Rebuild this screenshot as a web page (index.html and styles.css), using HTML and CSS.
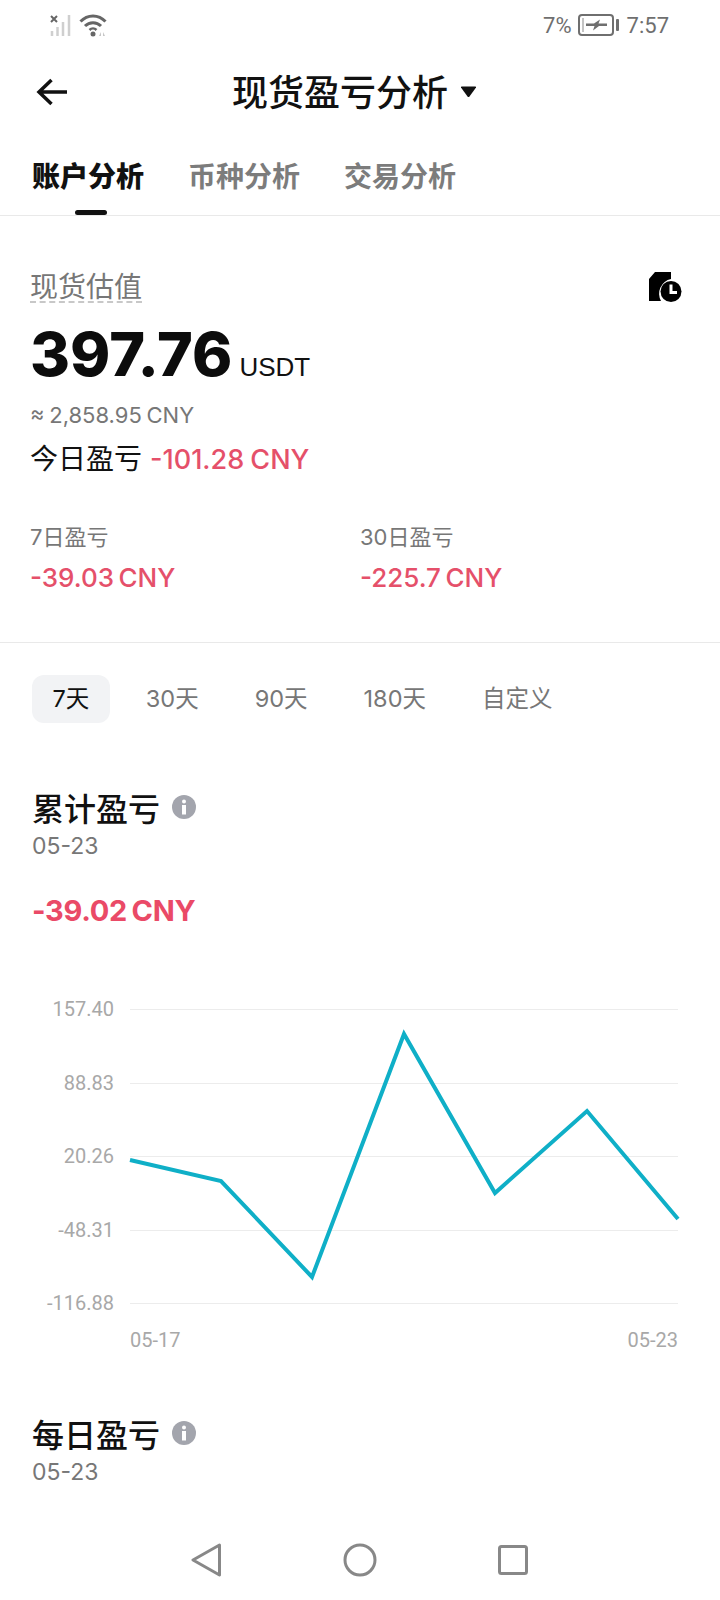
FILE: index.html
```html
<!DOCTYPE html>
<html>
<head>
  <title>现货盈亏分析</title>
  <meta charset="utf-8">
  <link rel="stylesheet" href="styles.css">
</head>
<body>
  <div class="page">
    <div class="status-bar">
      <div class="status-left">
        <svg width="26" height="24" viewBox="0 0 26 24">
          <path d="M3 3l6 6M9 3l-6 6" stroke="#666" stroke-width="2" fill="none"/>
          <path d="M4 23v-5M9.500 23v-9M15 23v-14M21 23v-21" stroke="#cfcfcf" stroke-width="2.500" fill="none"/>
        </svg>
        <svg width="30" height="24" viewBox="0 0 30 24">
          <path d="M1.500 8.500C8.500 1 19.500 1 26.500 8.500" stroke="#666" stroke-width="3" fill="none"/>
          <path d="M6 13C10.500 8.500 17.500 8.500 22 13" stroke="#666" stroke-width="3" fill="none"/>
          <path d="M10.500 17C12.500 15 15.500 15 17.500 17" stroke="#666" stroke-width="2.500" fill="none"/>
          <circle cx="14" cy="21" r="2.500" fill="#666"/>
          <path d="M20 23l2-4v4zM24 19l2 4h-2z" fill="#c6c6c6"/>
        </svg>
      </div>
      <div class="status-right">
        <span>7%</span>
        <svg class="battery" width="41" height="22" viewBox="0 0 41 22">
          <rect x="1" y="1" width="34" height="20" rx="3" stroke="#6f6f6f" stroke-width="2" fill="none"/>
          <rect x="4" y="4" width="2" height="14" fill="#c4c4c4"/>
          <path d="M8 9.500h8l6-4-1.500 4h8.500v2.500h-8l-6 4.500 1.500-4.500h-8.500z" fill="#6f6f6f"/>
          <rect x="38" y="5" width="3" height="12" rx="1" fill="#6f6f6f"/>
        </svg>
        <span>7:57</span>
      </div>
    </div>

    <div class="header">
      <svg class="back" width="32" height="28" viewBox="0 0 32 28">
        <path d="M31 14H3M15.500 2L3 14l12.500 12" stroke="#111" stroke-width="3.500" fill="none"/>
      </svg>
      <div class="title">现货盈亏分析</div>
      <svg class="caret" width="17" height="12" viewBox="0 0 17 12">
        <path d="M1 1.500Q0.500 0.500 2 0.500H15Q16.500 0.500 16 1.500L9.500 10.500Q8.500 11.500 7.500 10.500Z" fill="#111"/>
      </svg>
    </div>

    <div class="tabs">
      <div class="tab active">账户分析</div>
      <div class="tab">币种分析</div>
      <div class="tab">交易分析</div>
    </div>

    <div class="summary">
      <div class="summary-top">
        <div class="label-dashed">现货估值</div>
        <svg width="34" height="31" viewBox="0 0 34 31">
          <path d="M6 0H22V7A15 15 0 0 0 12 29H0V7Z" fill="#000"/>
          <circle cx="22" cy="19.500" r="10.500" fill="#000"/>
          <path d="M22 12.500V20.500H28" stroke="#fff" stroke-width="3" fill="none"/>
        </svg>
      </div>
      <div class="balance"><span class="balance-num">397.76</span><span class="balance-unit">USDT</span></div>
      <div class="approx">≈ 2,858.95 CNY</div>
      <div class="today">今日盈亏<span class="today-num">-101.28 CNY</span></div>
      <div class="stats">
        <div>
          <div class="stat-label">7日盈亏</div>
          <div class="stat-num">-39.03 CNY</div>
        </div>
        <div>
          <div class="stat-label">30日盈亏</div>
          <div class="stat-num">-225.7 CNY</div>
        </div>
      </div>
    </div>

    <div class="ranges">
      <div class="range active">7天</div>
      <div class="range">30天</div>
      <div class="range">90天</div>
      <div class="range">180天</div>
      <div class="range">自定义</div>
    </div>

    <div class="section-title first">累计盈亏
      <svg width="24" height="24" viewBox="0 0 24 24">
        <circle cx="12" cy="12" r="12" fill="#a3a5ad"/>
        <circle cx="12" cy="6.500" r="2" fill="#fff"/>
        <rect x="10" y="10" width="4" height="9.500" fill="#fff"/>
      </svg>
    </div>
    <div class="section-date">05-23</div>
    <div class="total">-39.02 CNY</div>

    <svg class="chart" width="720" height="370" viewBox="0 990 720 370">
      <line class="grid" x1="130" y1="1008.500" x2="678" y2="1008.500"/>
      <line class="grid" x1="130" y1="1082.500" x2="678" y2="1082.500"/>
      <line class="grid" x1="130" y1="1155.500" x2="678" y2="1155.500"/>
      <line class="grid" x1="130" y1="1229.500" x2="678" y2="1229.500"/>
      <line class="grid" x1="130" y1="1302.500" x2="678" y2="1302.500"/>
      <text class="axis" x="114" y="1015" text-anchor="end">157.40</text>
      <text class="axis" x="114" y="1089" text-anchor="end">88.83</text>
      <text class="axis" x="114" y="1162" text-anchor="end">20.26</text>
      <text class="axis" x="114" y="1236" text-anchor="end">-48.31</text>
      <text class="axis" x="114" y="1309" text-anchor="end">-116.88</text>
      <text class="axis" x="130" y="1346">05-17</text>
      <text class="axis" x="678" y="1346" text-anchor="end">05-23</text>
      <polyline class="line" points="130,1159 221,1180 312,1276 404,1033 495,1192 587,1110 678,1218"/>
    </svg>

    <div class="section-title second">每日盈亏
      <svg width="24" height="24" viewBox="0 0 24 24">
        <circle cx="12" cy="12" r="12" fill="#a3a5ad"/>
        <circle cx="12" cy="6.500" r="2" fill="#fff"/>
        <rect x="10" y="10" width="4" height="9.500" fill="#fff"/>
      </svg>
    </div>
    <div class="section-date">05-23</div>

    <div class="nav">
      <svg width="32" height="34" viewBox="0 0 32 34">
        <path d="M29.500 2L3 17l26.500 15z" stroke="#888" stroke-width="3" stroke-linejoin="round" fill="none"/>
      </svg>
      <svg width="34" height="34" viewBox="0 0 34 34">
        <circle cx="17" cy="17" r="15" stroke="#888" stroke-width="3" fill="none"/>
      </svg>
      <svg width="30" height="30" viewBox="0 0 30 30">
        <rect x="1.500" y="1.500" width="27" height="27" rx="2" stroke="#888" stroke-width="3" fill="none"/>
      </svg>
    </div>
  </div>
</body>
</html>
```

FILE: styles.css
```css
body {
  margin: 0;
  background-color: #fff;
  color: #111;
  font-family: Inter, "Noto Sans CJK SC", sans-serif;
}
.page {
  width: 720px;
  height: 1600px;
  display: flex;
  flex-direction: column;
  overflow: hidden;
}
.status-bar {
  height: 50px;
  display: flex;
  justify-content: space-between;
  align-items: center;
  padding: 0 51px 0 48px;
  font-family: Roboto, sans-serif;
  font-size: 22px;
  color: #6f6f6f;
}
.status-left {
  display: flex;
  align-items: center;
  gap: 5px;
}
.status-right {
  display: flex;
  align-items: center;
}
.battery {
  margin: 0 8px 0 6px;
}
.header {
  height: 84px;
  display: flex;
  align-items: center;
  padding-left: 36px;
}
.back {
  margin-right: 164px;
}
.title {
  font-size: 36px;
  font-weight: 500;
  margin-right: 12px;
  margin-bottom: 4px;
}
.tabs {
  height: 81px;
  display: flex;
  gap: 44px;
  padding-left: 32px;
  border-bottom: 1px solid #e9e9e9;
}
.tab {
  position: relative;
  height: 81px;
  padding-top: 23px;
  box-sizing: border-box;
  line-height: 40px;
  font-size: 28px;
  font-weight: 700;
  color: #7c7c7c;
}
.tab.active {
  color: #111;
  font-weight: 900;
}
.tab.active::after {
  content: "";
  position: absolute;
  left: 43px;
  bottom: 0;
  width: 32px;
  height: 5px;
  border-radius: 3px;
  background-color: #111;
}
.summary {
  padding: 56px 0 46px 30px;
  border-bottom: 1px solid #e9e9e9;
}
.summary-top {
  display: flex;
  justify-content: space-between;
  align-items: flex-start;
  padding-right: 37px;
}
.label-dashed {
  margin-top: 2px;
  line-height: 27px;
  font-size: 28px;
  color: #777;
  border-bottom: 2px dashed #c8c8c8;
}
.balance {
  display: flex;
  align-items: baseline;
  margin-top: 16px;
  height: 70px;
}
.balance-num {
  line-height: 70px;
  font-size: 61px;
  font-weight: 800;
  color: #0c0c0c;
}
.balance-unit {
  margin-left: 7px;
  line-height: 1;
  font-family: "Liberation Sans", sans-serif;
  font-size: 26px;
}
.approx {
  margin-top: 11px;
  line-height: 30px;
  font-size: 22px;
  word-spacing: -1.500px;
  color: #777;
}
.today {
  margin-top: 11px;
  line-height: 36px;
  font-size: 28px;
}
.today-num {
  margin-left: 8px;
  font-size: 27px;
  font-weight: 500;
  word-spacing: -1px;
  color: #e5506a;
}
.stats {
  display: grid;
  grid-template-columns: 330px 1fr;
  margin-top: 45px;
}
.stat-label {
  line-height: 28px;
  font-size: 22px;
  color: #777;
}
.stat-num {
  margin-top: 9px;
  line-height: 36px;
  font-size: 26px;
  font-weight: 500;
  word-spacing: -2.500px;
  color: #e5506a;
}
.ranges {
  display: flex;
  gap: 16px;
  margin-top: 32px;
  padding-left: 32px;
}
.range {
  height: 48px;
  padding: 0 20px;
  line-height: 48px;
  font-size: 23.5px;
  color: #777;
  border-radius: 12px;
}
.range.active {
  padding: 0 20.500px;
  color: #111;
  background-color: #f2f3f5;
}
.section-title {
  display: flex;
  align-items: center;
  gap: 12px;
  height: 40px;
  padding-left: 32px;
  font-size: 32px;
  font-weight: 500;
}
.section-title.first {
  margin-top: 64px;
}
.section-title.second {
  margin-top: 52px;
}
.section-date {
  margin-top: 4px;
  padding-left: 32px;
  line-height: 30px;
  font-size: 23px;
  color: #777;
}
.total {
  margin-top: 30px;
  padding-left: 32px;
  line-height: 40px;
  font-size: 29px;
  font-weight: 700;
  letter-spacing: -0.300px;
  word-spacing: -2px;
  color: #ea4a67;
}
.chart {
  display: block;
  margin-top: 60px;
}
.grid {
  stroke: #ececec;
  stroke-width: 1;
}
.axis {
  font-family: Roboto, sans-serif;
  font-size: 20px;
  fill: #a8a8a8;
}
.line {
  fill: none;
  stroke: #0fafc7;
  stroke-width: 4;
}
.nav {
  margin-top: auto;
  height: 80px;
  display: flex;
  align-items: center;
  padding-left: 190px;
  gap: 121px;
}
```
